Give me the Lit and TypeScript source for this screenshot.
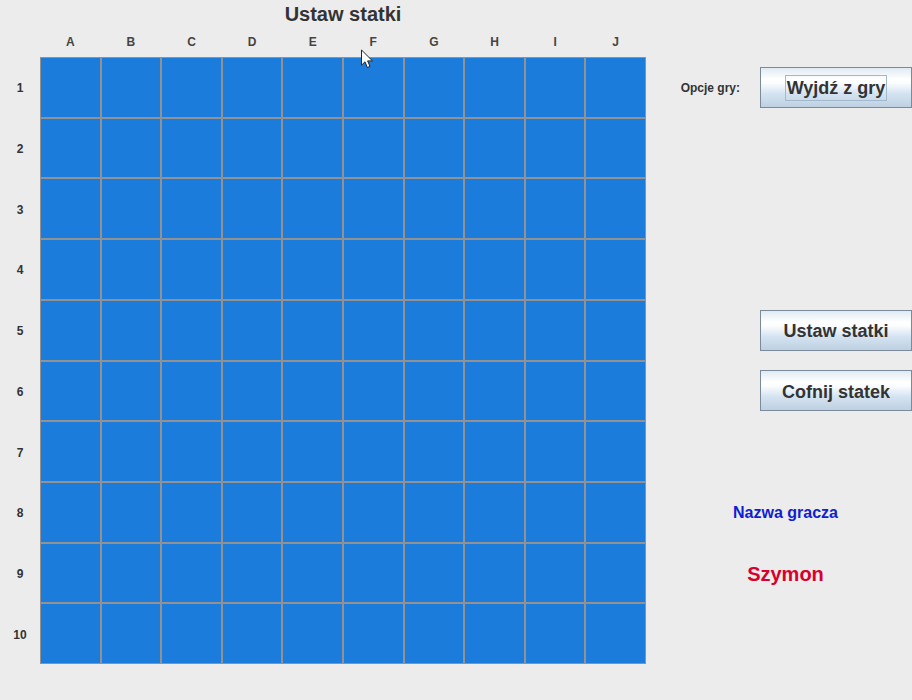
import { LitElement, html, css } from "lit";
import { customElement } from "lit/decorators.js";

const COLUMNS = ["A", "B", "C", "D", "E", "F", "G", "H", "I", "J"];
const ROWS = [1, 2, 3, 4, 5, 6, 7, 8, 9, 10];

@customElement("game-board")
export class GameBoard extends LitElement {
  static styles = css`
    :host {
      display: block;
      position: relative;
      min-height: 0;
    }
    .cells {
      box-sizing: border-box;
      height: 100%;
      display: grid;
      grid-template-columns: repeat(10, minmax(0, 1fr));
      grid-template-rows: repeat(10, minmax(0, 1fr));
      gap: 2px;
      padding: 1px;
      background: #929292;
    }
    .cell {
      margin: 0;
      padding: 0;
      border: 0;
      border-radius: 0;
      background: #1c7cdc;
    }
    .pointer {
      position: absolute;
      left: 53%;
      top: -8px;
      width: 13px;
      height: 21px;
      pointer-events: none;
    }
  `;

  render() {
    return html`
      <div class="cells">
        ${ROWS.map((row) =>
          COLUMNS.map(
            (column) =>
              html`<button class="cell" type="button" aria-label="${column}${row}"></button>`
          )
        )}
      </div>
      <svg class="pointer" viewBox="0 0 13 21" aria-hidden="true">
        <path
          d="M.5 1v15.2l3.5-3.4 2.4 5.7 2.6-1.1-2.4-5.5h4.9z"
          fill="#fff"
          stroke="#20242c"
        />
      </svg>
    `;
  }
}

@customElement("app-root")
export class AppRoot extends LitElement {
  static styles = css`
    :host {
      display: block;
      background: #ececec;
      color: #333;
      font: bold 12px/16px "Liberation Sans", Arial, sans-serif;
    }
    .game {
      box-sizing: border-box;
      min-height: 100vh;
      padding-bottom: 36px;
      display: grid;
      grid-template-columns: 40px minmax(0, 1fr) 266px;
      grid-template-rows: 28px 29px minmax(400px, 1fr);
    }
    .title {
      grid-column: 2;
      margin: 0;
      font-size: 20px;
      line-height: 28px;
      text-align: center;
    }
    .letters {
      grid-column: 2;
      grid-row: 2;
      display: grid;
      grid-template-columns: repeat(10, minmax(0, 1fr));
      line-height: 28px;
      text-align: center;
      color: #444;
    }
    .numbers,
    .side {
      grid-row: 3;
      display: grid;
      grid-template-rows: repeat(10, minmax(0, 1fr));
      align-items: center;
    }
    .numbers {
      grid-column: 1;
      text-align: center;
    }
    .numbers span,
    .side span {
      padding-top: 2px;
    }
    game-board {
      grid-column: 2;
      grid-row: 3;
    }
    .side {
      grid-column: 3;
      grid-template-columns: minmax(0, 1fr) 152px;
      column-gap: 20px;
      padding-left: 13px;
    }
    .options {
      text-align: right;
    }
    .action {
      grid-column: 2;
      height: 41px;
      margin: 0;
      padding: 2px 0 0;
      border: 1px solid #7a8a99;
      border-radius: 0;
      background: linear-gradient(#dde8f3, #fff 30%, #fafcfe 40%, #d4e3f1 65%, #bccfe0) border-box;
      color: #333;
      font: inherit;
      font-size: 18px;
      line-height: 24px;
    }
    .side .focus {
      display: inline-block;
      padding: 0 1px;
      border: 1px solid #a3b8cc;
    }
    .exit {
      grid-row: 1;
    }
    .place {
      grid-row: 5;
    }
    .undo {
      grid-row: 6;
    }
    .caption,
    .player {
      grid-column: 1 / -1;
      text-align: center;
    }
    .caption {
      grid-row: 8;
      color: #1020d0;
      font-size: 16px;
      line-height: 20px;
    }
    .player {
      grid-row: 9;
      color: #d8002c;
      font-size: 20px;
      line-height: 24px;
    }
  `;

  render() {
    return html`
      <main class="game">
        <h1 class="title">Ustaw statki</h1>
        <div class="letters">${COLUMNS.map((c) => html`<span>${c}</span>`)}</div>
        <div class="numbers">${ROWS.map((r) => html`<span>${r}</span>`)}</div>
        <game-board></game-board>
        <aside class="side">
          <span class="options">Opcje gry:</span>
          <button class="action exit" type="button"><span class="focus">Wyjdź z gry</span></button>
          <button class="action place" type="button">Ustaw statki</button>
          <button class="action undo" type="button">Cofnij statek</button>
          <span class="caption">Nazwa gracza</span>
          <span class="player">Szymon</span>
        </aside>
      </main>
    `;
  }
}
